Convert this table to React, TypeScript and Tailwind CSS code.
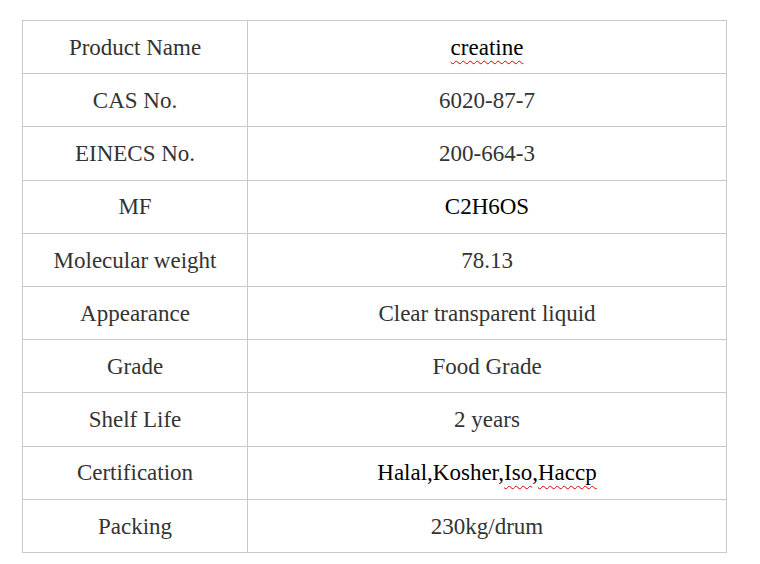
const rows: { label: string; value: React.ReactNode; dark?: boolean }[] = [
  {
    label: "Product Name",
    value: <span className="underline decoration-wavy decoration-[#d00] decoration-1 underline-offset-[5px]">creatine</span>,
    dark: true,
  },
  { label: "CAS No.", value: "6020-87-7" },
  { label: "EINECS No.", value: "200-664-3" },
  { label: "MF", value: "C2H6OS", dark: true },
  { label: "Molecular weight", value: "78.13" },
  { label: "Appearance", value: "Clear transparent liquid" },
  { label: "Grade", value: "Food Grade" },
  { label: "Shelf Life", value: "2 years" },
  {
    label: "Certification",
    value: (
      <>
        Halal,Kosher,
        <span className="underline decoration-wavy decoration-[#d00] decoration-1 underline-offset-[5px]">Iso</span>,
        <span className="underline decoration-wavy decoration-[#d00] decoration-1 underline-offset-[5px]">Haccp</span>
      </>
    ),
    dark: true,
  },
  { label: "Packing", value: "230kg/drum" },
];

export default function App() {
  return (
    <div className="w-[760px] h-[564px] bg-white pt-[20px] pl-[22px] font-['Liberation_Serif',serif] text-[23px]">
      <table className="w-[705px] border-collapse">
        <tbody>
          {rows.map((row) => (
            <tr key={row.label} className="h-[53.2px]">
              <td className="w-[225px] border border-[#c9c9c9] text-center align-middle p-0 pt-[2px] text-[#333]">
                {row.label}
              </td>
              <td
                className={`border border-[#c9c9c9] text-center align-middle p-0 pt-[2px] ${
                  row.dark ? "text-black" : "text-[#333]"
                }`}
              >
                {row.value}
              </td>
            </tr>
          ))}
        </tbody>
      </table>
    </div>
  );
}
